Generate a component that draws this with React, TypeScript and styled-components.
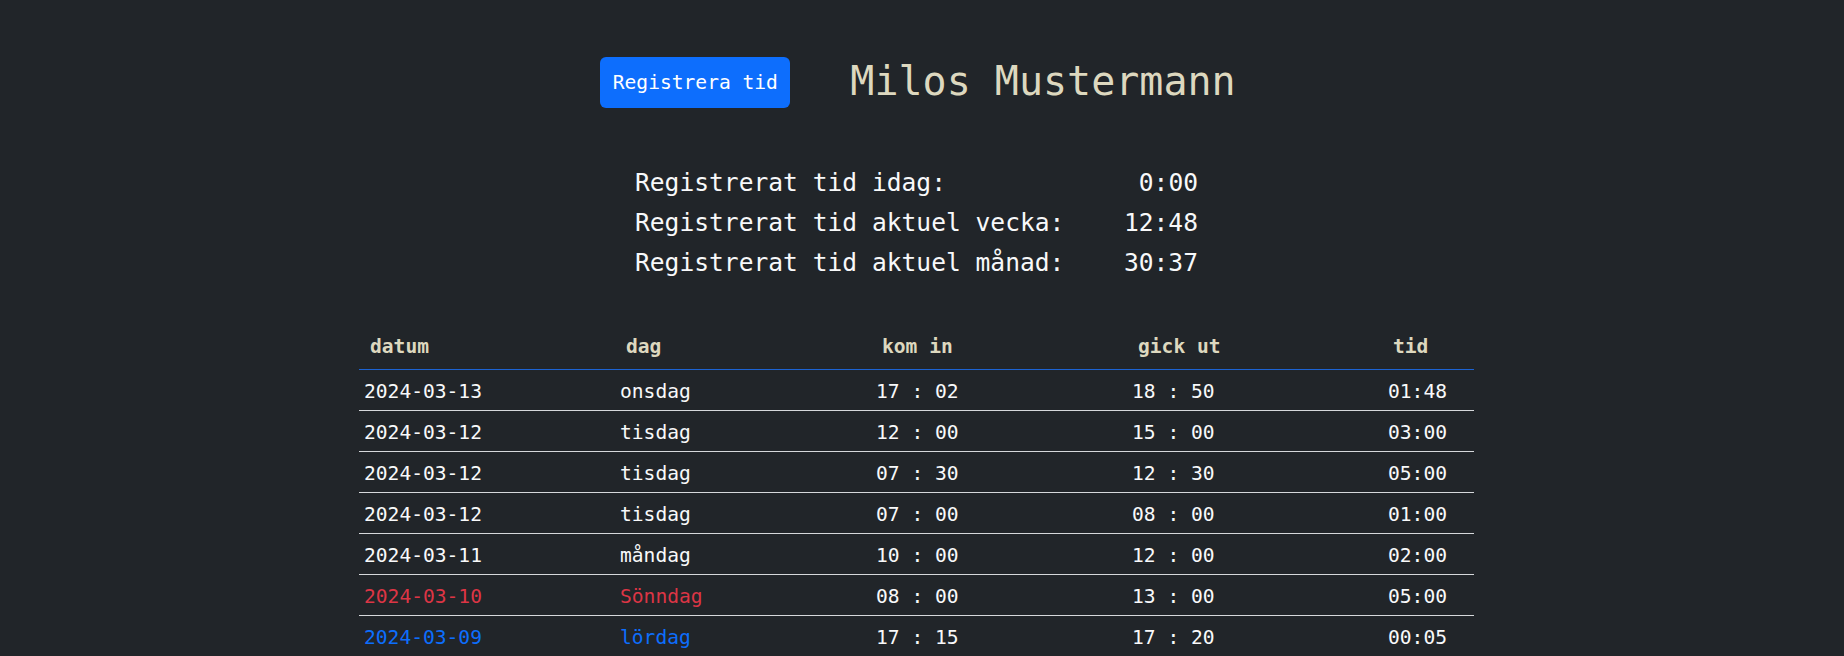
import React from 'react';
import styled, { createGlobalStyle } from 'styled-components';

const GlobalStyle = createGlobalStyle`
  html, body {
    margin: 0;
    padding: 0;
    background: #212529;
  }
  body {
    font-family: "DejaVu Sans Mono", "Liberation Mono", monospace;
    color: #f8f9fa;
  }
`;

const Page = styled.div`
  display: flex;
  flex-direction: column;
  align-items: center;
  padding: 57px 11px 0 0;
  min-height: 100vh;
  box-sizing: border-box;
`;

const Header = styled.div`
  display: flex;
  align-items: center;
  gap: 60px;
  padding-left: 3px;
`;

const RegisterButton = styled.button`
  width: 190px;
  height: 51px;
  border: none;
  border-radius: 6px;
  background: #0d6efd;
  color: #fff;
  font-family: inherit;
  font-size: 19.6px;
  cursor: pointer;
`;

const Name = styled.h1`
  margin: 0;
  font-size: 40px;
  font-weight: 400;
  color: #ddd8bf;
  line-height: 1;
  padding-bottom: 4px;
`;

const Stats = styled.div`
  display: grid;
  grid-template-columns: auto 1fr;
  width: 563px;
  margin-top: 55px;
  font-size: 24.6px;
  line-height: 40px;
`;

const StatValue = styled.span`
  text-align: right;
`;

const Table = styled.div`
  width: 1115px;
  margin-top: 46px;
`;

const Row = styled.div<{ $head?: boolean }>`
  display: grid;
  grid-template-columns: 256px 256px 256px 256px 1fr;
  height: 41px;
  align-items: center;
  box-sizing: border-box;
  border-bottom: ${(p) => (p.$head ? '1.5px solid #1c63d2' : '1px solid #d6d8db')};
`;

const HeadCell = styled.div`
  padding-left: 11px;
  font-size: 19.6px;
  font-weight: 700;
  color: #ddd8bf;
  padding-bottom: 6px;
`;

const LastHeadCell = styled(HeadCell)`
  padding-left: 10px;
`;

const Cell = styled.div<{ $tone?: 'red' | 'blue' }>`
  padding-left: 5px;
  padding-top: 2px;
  font-size: 19.6px;
  color: ${(p) => (p.$tone === 'red' ? '#dc3545' : p.$tone === 'blue' ? '#0d6efd' : '#f8f9fa')};
`;

type Entry = {
  date: string;
  day: string;
  inTime: string;
  outTime: string;
  total: string;
  tone?: 'red' | 'blue';
};

const entries: Entry[] = [
  { date: '2024-03-13', day: 'onsdag', inTime: '17 : 02', outTime: '18 : 50', total: '01:48' },
  { date: '2024-03-12', day: 'tisdag', inTime: '12 : 00', outTime: '15 : 00', total: '03:00' },
  { date: '2024-03-12', day: 'tisdag', inTime: '07 : 30', outTime: '12 : 30', total: '05:00' },
  { date: '2024-03-12', day: 'tisdag', inTime: '07 : 00', outTime: '08 : 00', total: '01:00' },
  { date: '2024-03-11', day: 'måndag', inTime: '10 : 00', outTime: '12 : 00', total: '02:00' },
  { date: '2024-03-10', day: 'Sönndag', inTime: '08 : 00', outTime: '13 : 00', total: '05:00', tone: 'red' },
  { date: '2024-03-09', day: 'lördag', inTime: '17 : 15', outTime: '17 : 20', total: '00:05', tone: 'blue' },
];

const stats = [
  { label: 'Registrerat tid idag:', value: '0:00' },
  { label: 'Registrerat tid aktuel vecka:', value: '12:48' },
  { label: 'Registrerat tid aktuel månad:', value: '30:37' },
];

const App: React.FC = () => {
  return (
    <>
      <GlobalStyle />
      <Page>
        <Header>
          <RegisterButton>Registrera tid</RegisterButton>
          <Name>Milos Mustermann</Name>
        </Header>

        <Stats>
          {stats.map((s) => (
            <React.Fragment key={s.label}>
              <span>{s.label}</span>
              <StatValue>{s.value}</StatValue>
            </React.Fragment>
          ))}
        </Stats>

        <Table>
          <Row $head>
            <HeadCell>datum</HeadCell>
            <HeadCell>dag</HeadCell>
            <HeadCell>kom in</HeadCell>
            <HeadCell>gick ut</HeadCell>
            <LastHeadCell>tid</LastHeadCell>
          </Row>
          {entries.map((e, i) => (
            <Row key={i}>
              <Cell $tone={e.tone}>{e.date}</Cell>
              <Cell $tone={e.tone}>{e.day}</Cell>
              <Cell>{e.inTime}</Cell>
              <Cell>{e.outTime}</Cell>
              <Cell>{e.total}</Cell>
            </Row>
          ))}
        </Table>
      </Page>
    </>
  );
};

export default App;
